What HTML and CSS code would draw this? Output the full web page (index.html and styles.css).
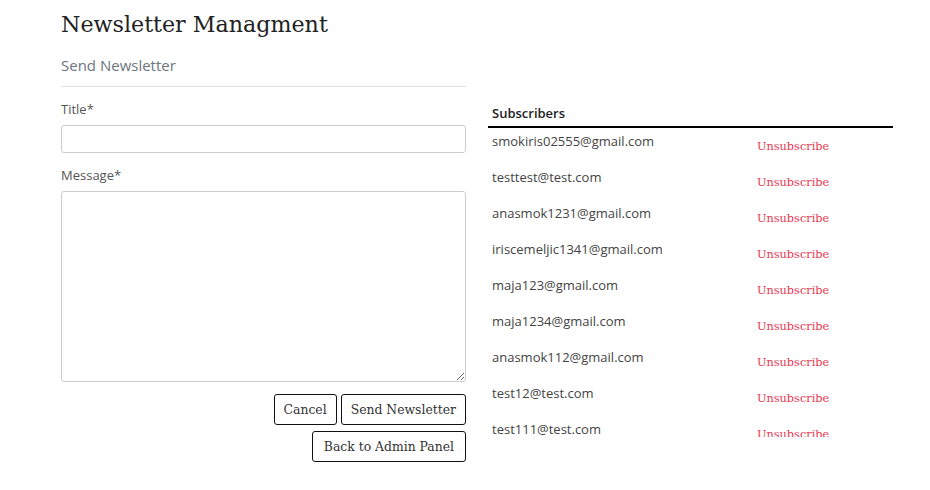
FILE: index.html
```html
<!DOCTYPE html>
<html>
<head>
<meta charset="utf-8">
<link rel="stylesheet" href="styles.css">
</head>
<body>
<div class="page">
  <section class="compose">
    <h1 class="title">Newsletter Managment</h1>
    <h2 class="subtitle">Send Newsletter</h2>
    <hr class="rule">
    <label class="label">Title*</label>
    <input class="field" type="text">
    <label class="label">Message*</label>
    <textarea class="field area"></textarea>
    <div class="actions">
      <button class="btn">Cancel</button>
      <button class="btn">Send Newsletter</button>
    </div>
    <div class="actions second">
      <button class="btn wide">Back to Admin Panel</button>
    </div>
  </section>
  <section class="subs">
    <div class="subs-head">Subscribers</div>
    <div class="subs-list">
      <div class="row"><span class="email">smokiris02555@gmail.com</span><span class="unsub">Unsubscribe</span></div>
      <div class="row"><span class="email">testtest@test.com</span><span class="unsub">Unsubscribe</span></div>
      <div class="row"><span class="email">anasmok1231@gmail.com</span><span class="unsub">Unsubscribe</span></div>
      <div class="row"><span class="email">iriscemeljic1341@gmail.com</span><span class="unsub">Unsubscribe</span></div>
      <div class="row"><span class="email">maja123@gmail.com</span><span class="unsub">Unsubscribe</span></div>
      <div class="row"><span class="email">maja1234@gmail.com</span><span class="unsub">Unsubscribe</span></div>
      <div class="row"><span class="email">anasmok112@gmail.com</span><span class="unsub">Unsubscribe</span></div>
      <div class="row"><span class="email">test12@test.com</span><span class="unsub">Unsubscribe</span></div>
      <div class="row"><span class="email">test111@test.com</span><span class="unsub">Unsubscribe</span></div>
    </div>
  </section>
</div>
</body>
</html>
```
FILE: styles.css
```css
html, body {
  margin: 0;
  padding: 0;
  background: #fff;
}
body {
  font-family: "Open Sans", "Noto Sans", sans-serif;
  color: #333;
}
.page {
  display: flex;
  gap: 22px;
  padding-left: 61px;
  padding-top: 8px;
  width: 832px;
}
.compose {
  width: 405px;
  display: flex;
  flex-direction: column;
}
.title {
  font-family: "DejaVu Serif", serif;
  font-weight: normal;
  font-size: 22.2px;
  line-height: 32px;
  margin: 0;
  color: #222;
}
.subtitle {
  font-weight: normal;
  font-size: 15px;
  line-height: 20px;
  color: #6c757d;
  margin: 15px 0 0 0;
}
.rule {
  border: 0;
  border-top: 1px solid #e2e2e2;
  margin: 11px 0 0 0;
  width: 100%;
}
.label {
  font-size: 13px;
  line-height: 18px;
  color: #555;
  margin-top: 13px;
}
.label + .field { margin-top: 7px; }
.field {
  box-sizing: border-box;
  width: 100%;
  height: 28px;
  border: 1px solid #ccc;
  border-radius: 3px;
  margin: 0;
  padding: 4px 8px;
  font-family: inherit;
}
.field + .label { margin-top: 13px; }
.area {
  height: 191px;
  resize: vertical;
}
.actions {
  display: flex;
  justify-content: flex-end;
  gap: 4px;
  margin-top: 12px;
}
.actions.second { margin-top: 6px; }
.btn {
  font-family: "DejaVu Serif", serif;
  font-size: 12.4px;
  color: #333;
  background: #fff;
  border: 1px solid #111;
  border-radius: 3px;
  height: 31px;
  padding: 0 9px;
  margin: 0;
}
.btn.wide { padding: 0 11px; }
.subs {
  width: 405px;
  padding-top: 96px;
}
.subs-head {
  font-size: 13px;
  font-weight: 600;
  color: #222;
  line-height: 18px;
  padding: 0 4px 4px;
  border-bottom: 2px solid #000;
}
.subs-list {
  height: 309px;
  overflow: hidden;
}
.row {
  display: flex;
  height: 36px;
}
.email {
  width: 265px;
  padding: 5px 0 0 4px;
  font-size: 13px;
  line-height: 16px;
  color: #444;
}
.unsub {
  font-family: "DejaVu Serif", serif;
  font-size: 11.3px;
  line-height: 18px;
  color: #e8374f;
  padding-top: 10px;
}
```
